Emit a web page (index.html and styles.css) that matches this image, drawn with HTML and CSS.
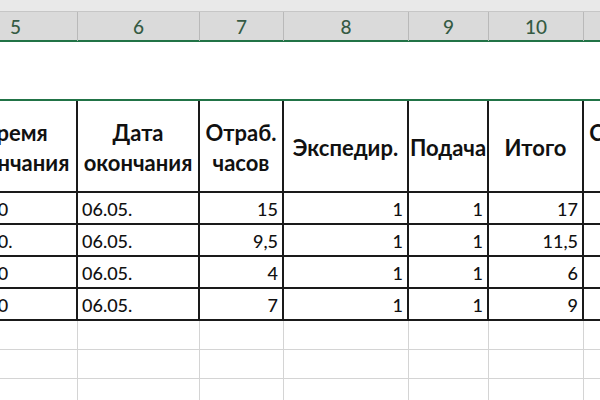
FILE: index.html
```html
<!DOCTYPE html>
<html lang="ru">
<head>
  <meta charset="UTF-8">
  <meta name="viewport" content="width=device-width, initial-scale=1.0">
  <title>Учёт часов</title>
  <link rel="stylesheet" href="styles.css">
</head>
<body>
  <div class="toolbar-edge"></div>

  <div class="sheet">
    <div class="grid col-heads">
      <div class="col-head">5</div>
      <div class="col-head">6</div>
      <div class="col-head">7</div>
      <div class="col-head">8</div>
      <div class="col-head">9</div>
      <div class="col-head">10</div>
      <div class="col-head">11</div>
    </div>

    <div class="blank-row"></div>

    <div class="grid hours">
      <div class="cell head">Время<br>окончания</div>
      <div class="cell head">Дата<br>окончания</div>
      <div class="cell head">Отраб.<br>часов</div>
      <div class="cell head">Экспедир.</div>
      <div class="cell head">Подача</div>
      <div class="cell head">Итого</div>
      <div class="cell head">Стоимость<br>работ</div>

      <div class="cell time">19:00</div>
      <div class="cell">06.05.</div>
      <div class="cell num">15</div>
      <div class="cell num">1</div>
      <div class="cell num">1</div>
      <div class="cell num">17</div>
      <div class="cell"></div>

      <div class="cell time">19:30.</div>
      <div class="cell">06.05.</div>
      <div class="cell num">9,5</div>
      <div class="cell num">1</div>
      <div class="cell num">1</div>
      <div class="cell num">11,5</div>
      <div class="cell"></div>

      <div class="cell time">17:00</div>
      <div class="cell">06.05.</div>
      <div class="cell num">4</div>
      <div class="cell num">1</div>
      <div class="cell num">1</div>
      <div class="cell num">6</div>
      <div class="cell"></div>

      <div class="cell time">18:00</div>
      <div class="cell">06.05.</div>
      <div class="cell num">7</div>
      <div class="cell num">1</div>
      <div class="cell num">1</div>
      <div class="cell num">9</div>
      <div class="cell"></div>
    </div>

    <div class="grid empty-rows">
      <div></div><div></div><div></div><div></div><div></div><div></div><div></div>
      <div></div><div></div><div></div><div></div><div></div><div></div><div></div>
      <div></div><div></div><div></div><div></div><div></div><div></div><div></div>
    </div>
  </div>
</body>
</html>
```

FILE: styles.css
```css
body {
  margin: 0;
  overflow: hidden;
  background-color: #fff;
  font-family: Lato, "Open Sans", sans-serif;
  color: #111;
}

.toolbar-edge {
  height: 11px;
  background-color: #e9e9e9;
  border-bottom: 1px solid #c6c6c6;
}

/* sheet starts left of the window, column 5 is cut off */
.sheet {
  margin-left: -46px;
  width: 760px;
}

.grid {
  display: grid;
  grid-template-columns: 124px 122px 84px 125px 80px 95px 124px;
}

.col-heads {
  height: 28px;
  background-color: #dadada;
  border-bottom: 2px solid #217346;
}
.col-head {
  border-right: 1px solid #b9b9b9;
  text-align: center;
  font-size: 19px;
  line-height: 29px;
  font-weight: 500;
  color: #355a43;
}

.blank-row {
  height: 57px;
  border-bottom: 2px solid #217346;
}

.cell {
  height: 28px;
  border-right: 2px solid #1a1a1a;
  border-bottom: 2px solid #1a1a1a;
  padding: 2px 4px 0 4px;
  font-size: 18px;
  font-weight: 500;
  line-height: 28px;
  white-space: nowrap;
  overflow: hidden;
}
.cell.head {
  height: 86px;
  padding: 4px 0 0 0;
  display: flex;
  align-items: center;
  justify-content: center;
  text-align: center;
  font-size: 22px;
  font-weight: bold;
  line-height: 30px;
}
.cell.num {
  text-align: right;
}
.cell.time {
  padding-left: 8px;
}

.empty-rows > div {
  height: 28px;
  border-right: 1px solid #d4d4d4;
  border-bottom: 1px solid #d4d4d4;
}
```
